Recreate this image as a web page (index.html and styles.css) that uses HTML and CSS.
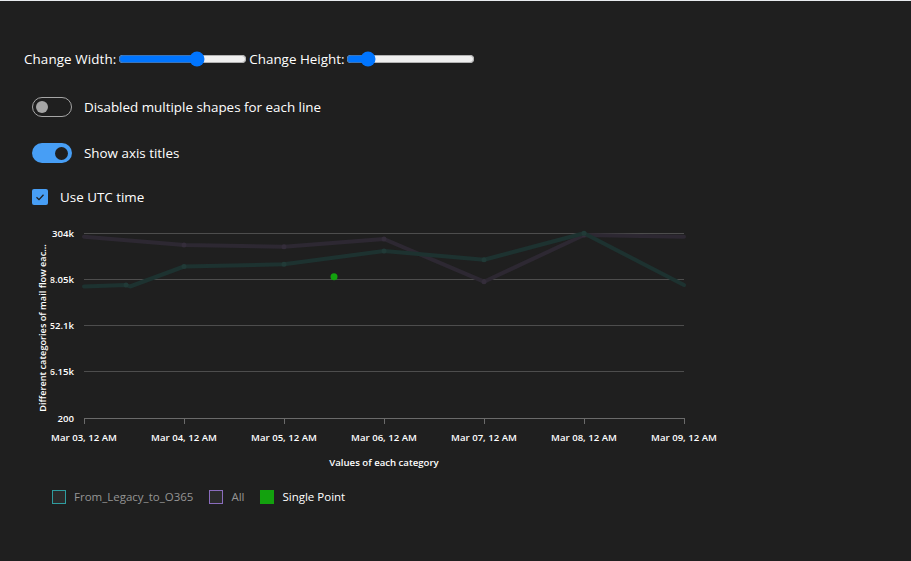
FILE: index.html
```html
<!DOCTYPE html>
<html lang="en">
<head>
<meta charset="utf-8">
<title>Line chart</title>
<link rel="stylesheet" href="styles.css">
</head>
<body>
<div class="page">
  <div class="size-row">
    <label class="size-label" for="w">Change Width:</label><input id="w" class="range" type="range" min="200" max="1000" value="700"><label class="size-label" for="h">Change Height:</label><input id="h" class="range" type="range" min="0" max="100" value="12">
  </div>

  <div class="toggle-row first">
    <span class="toggle off"><span class="thumb"></span></span>
    <span class="opt-label">Disabled multiple shapes for each line</span>
  </div>
  <div class="toggle-row second">
    <span class="toggle on"><span class="thumb"></span></span>
    <span class="opt-label">Show axis titles</span>
  </div>
  <div class="check-row">
    <span class="checkbox">
      <svg width="16" height="16" viewBox="0 0 16 16"><polyline points="4.5,8.2 7,10.6 11.5,5.8" fill="none" stroke="#1f1f1f" stroke-width="1.3"/></svg>
    </span>
    <span class="opt-label">Use UTC time</span>
  </div>

  <svg class="chart" width="700" height="250" viewBox="0 0 700 250">
    <defs>
      <clipPath id="yclip"><rect x="20.5" y="0" width="60" height="250"/></clipPath>
    </defs>
    <g class="grid">
      <line x1="54" y1="13.5" x2="654" y2="13.5"/>
      <line x1="54" y1="59.5" x2="654" y2="59.5"/>
      <line x1="54" y1="105.5" x2="654" y2="105.5"/>
      <line x1="54" y1="151.5" x2="654" y2="151.5"/>
    </g>
    <g class="axis">
      <line x1="54" y1="198.5" x2="654" y2="198.5"/>
      <line x1="54.5" y1="198" x2="54.5" y2="204"/>
      <line x1="154.5" y1="198" x2="154.5" y2="204"/>
      <line x1="254.5" y1="198" x2="254.5" y2="204"/>
      <line x1="354.5" y1="198" x2="354.5" y2="204"/>
      <line x1="454.5" y1="198" x2="454.5" y2="204"/>
      <line x1="554.5" y1="198" x2="554.5" y2="204"/>
      <line x1="654.5" y1="198" x2="654.5" y2="204"/>
    </g>
    <g class="ylabels" clip-path="url(#yclip)">
      <text x="44" y="16.5">304k</text>
      <text x="44" y="62.5">228.05k</text>
      <text x="44" y="108.5">152.1k</text>
      <text x="44" y="154.5">76.15k</text>
      <text x="44" y="201.5">200</text>
    </g>
    <text class="ytitle" transform="translate(16,108) rotate(-90)">Different categories of mail flow eac...</text>
    <g class="xlabels">
      <text x="54" y="221">Mar 03, 12 AM</text>
      <text x="154" y="221">Mar 04, 12 AM</text>
      <text x="254" y="221">Mar 05, 12 AM</text>
      <text x="354" y="221">Mar 06, 12 AM</text>
      <text x="454" y="221">Mar 07, 12 AM</text>
      <text x="554" y="221">Mar 08, 12 AM</text>
      <text x="654" y="221">Mar 09, 12 AM</text>
    </g>
    <text class="xtitle" x="354" y="246">Values of each category</text>

    <polyline class="line purple" points="54,16.7 154,25 254,26.7 354,19 454,61.7 554,15 654,16.7"/>
    <g class="pts purple-pt">
      <circle cx="154" cy="25" r="2.5"/><circle cx="254" cy="26.7" r="2.5"/><circle cx="354" cy="19" r="2.5"/><circle cx="454" cy="61.7" r="2.5"/><circle cx="554" cy="15" r="2.5"/>
    </g>
    <polyline class="line teal" points="54,66.5 96,65 100,66.5 154,46.5 254,44.3 354,31 454,39.7 554,13.3 654,65"/>
    <g class="pts teal-pt">
      <circle cx="96" cy="65" r="2.5"/><circle cx="154" cy="46.5" r="2.5"/><circle cx="254" cy="44.3" r="2.5"/><circle cx="354" cy="31" r="2.5"/><circle cx="454" cy="39.7" r="2.5"/><circle cx="554" cy="13.3" r="2.5"/>
    </g>
    <circle class="single" cx="304" cy="56.7" r="3.5"/>
  </svg>

  <div class="legend">
    <span class="legend-item"><span class="swatch teal-sw"></span><span class="legend-text dim">From_Legacy_to_O365</span></span>
    <span class="legend-item"><span class="swatch purple-sw"></span><span class="legend-text dim">All</span></span>
    <span class="legend-item"><span class="swatch green-sw"></span><span class="legend-text">Single Point</span></span>
  </div>
</div>
</body>
</html>
```

FILE: styles.css
```css
html, body {
  margin: 0;
  padding: 0;
  background: #1f1f1f;
}
body {
  font-family: "Open Sans", "Liberation Sans", sans-serif;
  font-size: 13.4px;
  color: #ffffff;
  height: 561px;
  overflow: hidden;
}
.page {
  border-top: 1px solid #e8ebee;
  padding: 48px 0 0 24px;
  display: flex;
  flex-direction: column;
  align-items: flex-start;
}
.size-row {
  display: flex;
  align-items: center;
  height: 20px;
  line-height: 20px;
}
.size-label {
  white-space: nowrap;
}
.size-label:first-child {
  letter-spacing: 0.1px;
}
.range {
  width: 129px;
  height: 16px;
  margin: 0 2px;
}
.toggle-row, .check-row {
  display: flex;
  align-items: center;
  margin-left: 8px;
  height: 20px;
  line-height: 20px;
}
.toggle-row.first { margin-top: 28px; }
.toggle-row.second { margin-top: 26px; }
.check-row { margin-top: 24px; }
.toggle {
  box-sizing: border-box;
  width: 40px;
  height: 20px;
  border-radius: 10px;
  display: flex;
  align-items: center;
  padding: 0 3px;
  margin-right: 12px;
}
.toggle .thumb {
  width: 12px;
  height: 12px;
  border-radius: 50%;
}
.toggle.off {
  border: 1px solid #a6a6a6;
}
.toggle.off .thumb {
  background: #a6a6a6;
}
.toggle.on {
  background: #479ef5;
  justify-content: flex-end;
  padding: 0 4px;
}
.toggle.on .thumb {
  background: #1f1f1f;
  width: 13px;
  height: 13px;
}
.checkbox {
  width: 16px;
  height: 16px;
  background: #479ef5;
  border-radius: 2px;
  margin-right: 12px;
  display: flex;
}
.chart {
  display: block;
  margin: 13px 0 0 6px;
  font-family: "Open Sans", "Liberation Sans", sans-serif;
}
.grid line {
  stroke: #4d4d4d;
  stroke-width: 1;
}
.axis line {
  stroke: #6a6a6a;
  stroke-width: 1;
}
.ylabels text {
  fill: #ffffff;
  font-size: 9.6px;
  font-weight: 600;
  text-anchor: end;
}
.ytitle {
  fill: #ffffff;
  font-size: 9.2px;
  font-weight: 600;
  text-anchor: middle;
}
.xlabels text {
  fill: #ffffff;
  font-size: 9.6px;
  font-weight: 600;
  text-anchor: middle;
}
.xtitle {
  fill: #ffffff;
  font-size: 9.6px;
  font-weight: 600;
  text-anchor: middle;
}
.line {
  fill: none;
  stroke-width: 4;
  stroke-linejoin: round;
  stroke-linecap: round;
}
.line.purple { stroke: #2d2832; }
.line.teal { stroke: #1d3230; }
.purple-pt circle { fill: #342d3a; }
.teal-pt circle { fill: #213a37; }
.single { fill: #13a10e; }
.legend {
  display: flex;
  align-items: center;
  margin: 17px 0 0 28px;
  height: 20px;
  line-height: 20px;
  font-size: 11.5px;
}
.legend-item {
  display: flex;
  align-items: center;
  margin-right: 16px;
}
.swatch {
  box-sizing: border-box;
  width: 14px;
  height: 14px;
  margin-right: 8px;
  background: #2b2b2b;
}
.teal-sw { border: 1px solid #2f9c9f; }
.purple-sw { border: 1px solid #8a6cbd; }
.green-sw { background: #13a10e; }
.legend-text { color: #ffffff; }
.legend-text.dim { color: #959595; }
```
